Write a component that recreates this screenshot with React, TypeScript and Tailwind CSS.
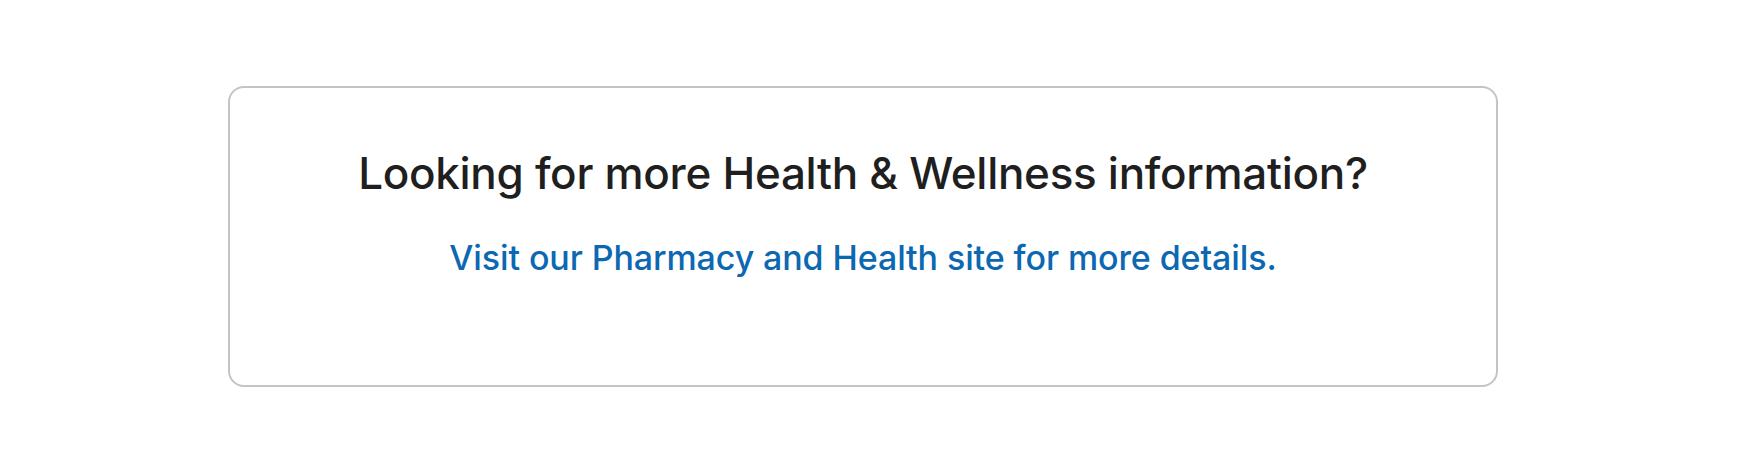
export default function App() {
  return (
    <div className="min-h-[474px] w-full bg-white" style={{ fontFamily: "Inter, 'Noto Sans', sans-serif" }}>
      <div className="ml-[228px] pt-[86px]">
        <div className="flex h-[301px] w-[1270px] flex-col items-center rounded-2xl border-2 border-[#c4c4c4] pt-[58px]">
          <h2 className="text-[44px] font-medium leading-[54px] tracking-[-0.3px] text-[#1f1f1f]">
            Looking for more Health &amp; Wellness information?
          </h2>
          <a href="#" className="mt-[38px] text-[34px] font-medium leading-[40px] tracking-[-0.1px] text-[#0b68b1]">
            Visit our Pharmacy and Health site for more details.
          </a>
        </div>
      </div>
    </div>
  );
}
